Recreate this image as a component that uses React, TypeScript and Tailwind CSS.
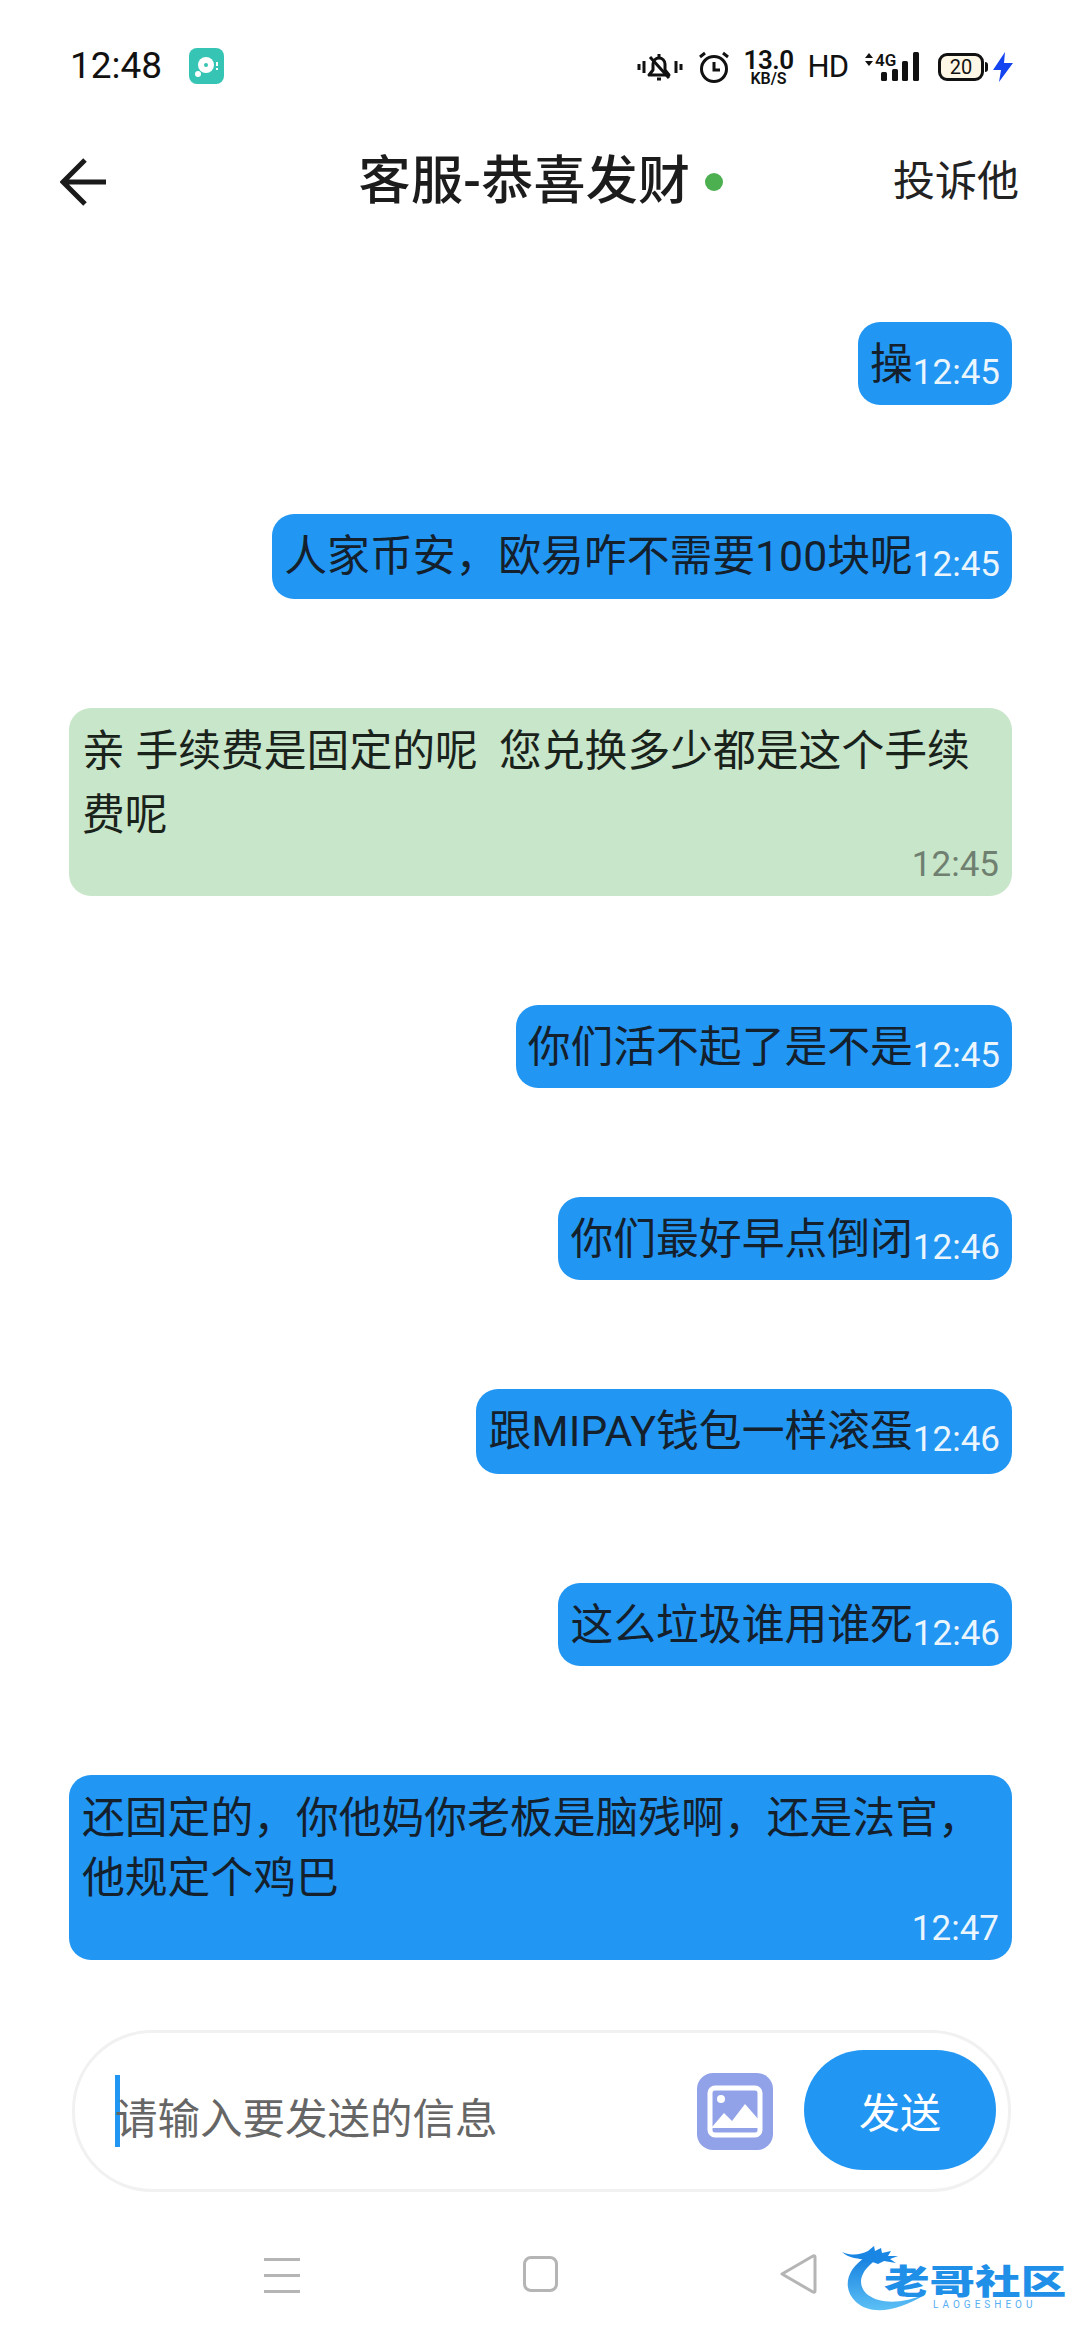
import React from 'react';

const FONT = "font-['Roboto','Noto_Sans_CJK_SC',sans-serif]";

interface Message {
  text: string;
  time: string;
  tone: 'blue' | 'green';
  wide?: boolean;
  heightClass?: string;
}

const messages: Message[] = [
  { text: '操', time: '12:45', tone: 'blue', heightClass: 'h-[83px]' },
  { text: '人家币安，欧易咋不需要100块呢', time: '12:45', tone: 'blue', heightClass: 'h-[85px]' },
  { text: '亲 手续费是固定的呢  您兑换多少都是这个手续费呢', time: '12:45', tone: 'green', wide: true, heightClass: 'h-[188px] pt-[11px]' },
  { text: '你们活不起了是不是', time: '12:45', tone: 'blue', heightClass: 'h-[83px]' },
  { text: '你们最好早点倒闭', time: '12:46', tone: 'blue', heightClass: 'h-[83px]' },
  { text: '跟MIPAY钱包一样滚蛋', time: '12:46', tone: 'blue', heightClass: 'h-[85px]' },
  { text: '这么垃圾谁用谁死', time: '12:46', tone: 'blue', heightClass: 'h-[83px]' },
  { text: '还固定的，你他妈你老板是脑残啊，还是法官，他规定个鸡巴', time: '12:47', tone: 'blue', wide: true, heightClass: 'h-[185px] pt-[13px]' },
];

const Bubble: React.FC<{ message: Message }> = ({ message }) => {
  const { text, time, tone, wide, heightClass } = message;
  const bg = tone === 'blue' ? 'bg-[#2196f3]' : 'bg-[#c8e6c9]';
  const timeColor = tone === 'blue' ? 'text-[#eaf5fe]' : 'text-[#6f7f70]';

  if (wide) {
    const lineHeight = tone === 'green' ? 'leading-[64px] text-[#1a221c]' : 'leading-[60px] text-[#14202c]';
    const timeOffset = tone === 'green' ? 'mt-[-4px]' : 'mt-[-1px]';
    return (
      <div className={`w-[943px] rounded-[22px] px-[13px] ${heightClass} ${bg}`}>
        <p className={`text-[42.800px] whitespace-pre-wrap ${lineHeight}`}>{text}</p>
        <p className={`text-right text-[35px] leading-[44px] ${timeOffset} ${timeColor}`}>{time}</p>
      </div>
    );
  }

  return (
    <div className={`self-end flex items-start rounded-[22px] pl-[12px] pr-[12px] ${heightClass} ${bg}`}>
      <span className="text-[42.800px] leading-[56px] mt-[14px] text-[#14202c] whitespace-pre">{text}</span>
      <span className={`text-[35px] leading-[44px] mt-[29px] ${timeColor}`}>{time}</span>
    </div>
  );
};

const StatusBar: React.FC = () => (
  <div className="h-[132px] flex items-start justify-between pl-[70px] pr-[67px] pt-[48px]">
    <div className="flex items-center gap-[27px] h-[36px]">
      <span className="text-[37px] leading-[36px] text-[#111]">12:48</span>
      <svg width="35" height="36" viewBox="0 0 35 36">
        <rect width="35" height="36" rx="8" fill="#36c5b4" />
        <circle cx="17" cy="17" r="8" fill="#fff" />
        <circle cx="17" cy="17" r="2" fill="#36c5b4" />
        <circle cx="9" cy="26" r="3" fill="#fff" />
        <rect x="27" y="14" width="2" height="4" fill="#fff" />
        <rect x="27" y="20" width="2" height="2" fill="#fff" />
      </svg>
    </div>
    <div className="flex items-center h-[40px] mt-[-1px] text-[#111]">
      {/* muted bell with vibrate ticks */}
      <svg width="46" height="32" viewBox="0 0 46 32" fill="none" stroke="#111" strokeWidth="3">
        <path d="M2 13v6M7 10v12M39 10v12M44 13v6" />
        <path d="M12 24h20l-4-5v-6a6 6 0 0 0-12 0v6z" strokeLinejoin="round" />
        <path d="M22 3v3M20 28h4M13 6l19 21" />
      </svg>
      <svg className="ml-[16px]" width="30" height="32" viewBox="0 0 30 32" fill="none" stroke="#111" strokeWidth="3">
        <circle cx="15" cy="18" r="12.5" />
        <path d="M15 11v8h6" />
        <path d="M1 6l5-4M29 6l-5-4" />
      </svg>
      <div className="ml-[16px] w-[48px] flex flex-col items-center font-semibold text-[#111]">
        <span className="text-[26px] leading-[22px] tracking-[-0.5px]">13.0</span>
        <span className="text-[16px] leading-[15px]">KB/S</span>
      </div>
      <span className="ml-[15px] text-[31px] leading-[40px] tracking-[-1px]">HD</span>
      <svg className="ml-[13px]" width="58" height="32" viewBox="0 0 58 32" fill="#111">
        <path d="M4 7l4-5 4 5zM4 10l4 5 4-5z" />
        <text x="14" y="15" fontSize="17" fontWeight="600" fontFamily="Roboto">4G</text>
        <rect x="20" y="21" width="6" height="9" rx="1.5" />
        <rect x="31" y="18" width="6" height="12" rx="1.5" />
        <rect x="41" y="10" width="6" height="20" rx="1.5" />
        <rect x="52" y="1" width="6" height="29" rx="1.5" />
      </svg>
      <div className="ml-[19px] relative w-[46px] h-[28px] rounded-[9px] border-[3px] border-[#111] bg-[#fff7e6] flex items-center justify-center">
        <span className="text-[20px] leading-[22px] text-[#111]">20</span>
        <div className="absolute right-[-7px] top-[6px] w-[3px] h-[10px] rounded-r bg-[#111]" />
      </div>
      <svg className="ml-[9px]" width="20" height="30" viewBox="0 0 20 30" fill="#1444f0">
        <path d="M12 0L0 18h8l-2 12L20 11h-9z" />
      </svg>
    </div>
  </div>
);

const Header: React.FC = () => (
  <div className="h-[96px] flex items-center relative pl-[60px] pr-[61px] pt-[3px] justify-between">
    <svg width="46" height="48" viewBox="0 0 46 48" fill="none" stroke="#1a1a1a" strokeWidth="5">
      <path d="M25 2L3 24l22 22M3 24h43" />
    </svg>
    <div className="flex items-center ml-[83px]">
      <span className="text-[52px] leading-[64px] font-medium text-[#1c1c1c] tracking-[0.3px]">客服-恭喜发财</span>
      <div className="w-[18px] h-[18px] rounded-full bg-[#4caf50] ml-[15px]" />
    </div>
    <span className="text-[42px] leading-[56px] text-[#222]">投诉他</span>
  </div>
);

const InputBar: React.FC = () => (
  <div className="ml-[72px] mr-[69px] h-[162px] rounded-[80px] border-[3px] border-[#f1f1f1] bg-white flex items-center pl-[40px] pr-[12px]">
    <div className="w-[5px] h-[72px] bg-[#2196f3]" />
    <span className="text-[42.500px] leading-[56px] text-[#666] mt-[18px] ml-[-5px] flex-1">请输入要发送的信息</span>
    <svg width="76" height="77" viewBox="0 0 76 77">
      <rect width="76" height="77" rx="16" fill="#92a2e8" />
      <rect x="13" y="15" width="50" height="47" rx="5" fill="none" stroke="#fff" strokeWidth="5" />
      <path d="M15 54l12-14 8 8 13-17 14 16v8H15z" fill="#fff" />
      <circle cx="24" cy="26" r="4" fill="#fff" />
    </svg>
    <button className="ml-[31px] w-[192px] h-[120px] rounded-[60px] bg-[#2196f3] text-white text-[41px] leading-[56px] pt-[9px] mb-[3px]">发送</button>
  </div>
);

const NavBar: React.FC = () => (
  <div className="relative h-[148px] flex items-start pt-[64px] pl-[264px]">
    <div className="mt-[2px] w-[36px] h-[35px] flex flex-col justify-between">
      <div className="h-[3px] bg-[#b5b5b5]" />
      <div className="h-[3px] bg-[#b5b5b5]" />
      <div className="h-[3px] bg-[#b5b5b5]" />
    </div>
    <div className="ml-[223px] w-[35px] h-[36px] rounded-[8px] border-[3px] border-[#b5b5b5]" />
    <svg className="ml-[221px] mt-[-3px]" width="38" height="42" viewBox="0 0 38 42" fill="none" stroke="#b5b5b5" strokeWidth="3" strokeLinejoin="round">
      <path d="M34 3L3 21l31 18c1 .6 2 0 2-1V4c0-1-1-1.600-2-1z" />
    </svg>
    {/* watermark over the nav bar */}
    <div className="absolute left-[842px] top-[53px] w-[222px] h-[70px]">
      <svg className="absolute left-0 top-0" width="100" height="70" viewBox="0 0 100 70" fill="none">
        <defs>
          <linearGradient id="ring" x1="0" y1="0" x2="0" y2="1">
            <stop offset="0" stopColor="#1580e0" />
            <stop offset="1" stopColor="#5cc0f5" />
          </linearGradient>
        </defs>
        <path d="M24 12C4 24 0 44 14 57c13 12 38 12 70-8C62 58 40 60 26 50 14 40 18 26 34 15z" fill="url(#ring)" />
        <path d="M0 7c10 4 18 3 26-1l6-5 1 5 6-3 1 5 9-2-3 5 10 0-8 3 6 4-12-2-6 3-11-4C18 14 6 13 0 7z" fill="#1a86e4" />
      </svg>
      <span className="absolute left-[42px] top-[19px] origin-left scale-x-[1.34] text-[34px] leading-[36px] font-black text-[#1f8fe8] whitespace-nowrap">老哥社区</span>
      <span className="absolute left-[91px] top-[53px] text-[10px] leading-[14px] text-[#58aef0] tracking-[4px] whitespace-nowrap">LAOGESHEOU</span>
    </div>
  </div>
);

export default function App() {
  return (
    <div className={`w-[1080px] h-[2340px] bg-white flex flex-col overflow-hidden ${FONT}`}>
      <StatusBar />
      <Header />
      <div className="flex-1 flex flex-col items-end gap-[109px] pt-[94px] pl-[68px] pr-[68px]">
        {messages.map((m, i) => (
          <Bubble key={i} message={m} />
        ))}
      </div>
      <InputBar />
      <NavBar />
    </div>
  );
}
